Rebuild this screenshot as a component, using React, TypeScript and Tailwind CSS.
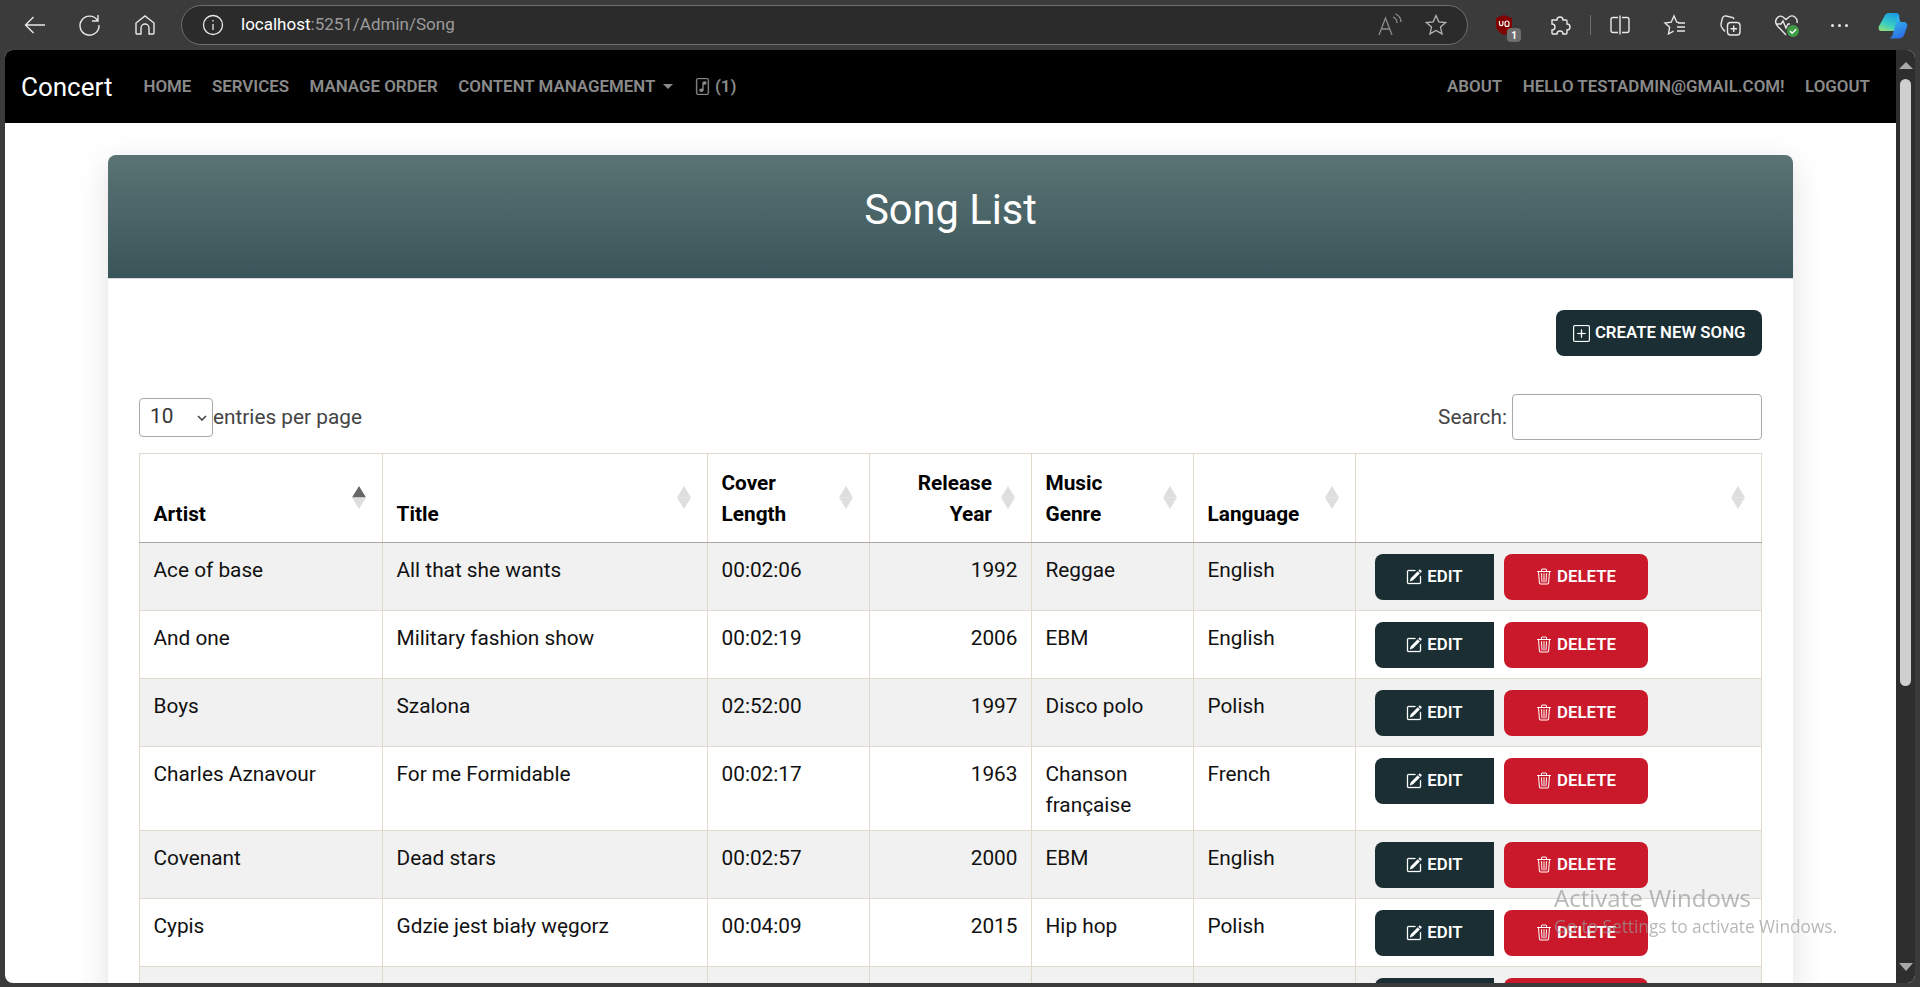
import React from "react";
import { BsPlusSquare, BsPencilSquare, BsTrash3, BsFileMusic } from "react-icons/bs";

const rows = [
  ["Ace of base", "All that she wants", "00:02:06", "1992", "Reggae", "English"],
  ["And one", "Military fashion show", "00:02:19", "2006", "EBM", "English"],
  ["Boys", "Szalona", "02:52:00", "1997", "Disco polo", "Polish"],
  ["Charles Aznavour", "For me Formidable", "00:02:17", "1963", "Chanson française", "French"],
  ["Covenant", "Dead stars", "00:02:57", "2000", "EBM", "English"],
  ["Cypis", "Gdzie jest biały węgorz", "00:04:09", "2015", "Hip hop", "Polish"],
  ["", "", "", "", "", ""],
];

function Sort({ active }: { active?: boolean }) {
  return (
    <svg width="14" height="23" viewBox="0 0 14 23" className="absolute right-[16px] top-[32px]">
      <path d="M7 0 L14 11.500 L0 11.500 Z" fill={active ? "#666666" : "#dedede"} />
      <path d="M7 23 L14 11.500 L0 11.500 Z" fill="#dedede" />
    </svg>
  );
}

function Th({ children, right, active }: { children?: React.ReactNode; right?: boolean; active?: boolean }) {
  return (
    <th className={`relative border border-[#e2d9ce] border-b-[#a9a6a3] pb-[11.5px] pl-[13.5px] pt-[14px] align-bottom text-[20.8px] font-bold leading-[31.2px] text-black ${right ? "pr-[39px] text-right" : "pr-[38px] text-left"}`}>
      {children}
      <Sort active={active} />
    </th>
  );
}

function Browser() {
  const c = "#e8e8e8";
  return (
    <div className="flex h-[50px] items-center bg-[#3b3b3b]">
      <svg width="24" height="24" viewBox="0 0 24 24" fill="none" stroke={c} strokeWidth="1.4" className="ml-[23px]"><path d="M22 12H3M10.500 4l-8 8 8 8" /></svg>
      <svg width="24" height="24" viewBox="0 0 24 24" fill="none" stroke={c} strokeWidth="1.4" className="ml-[31px]"><path d="M19.500 7.500A9.500 9.500 0 1 0 21 12M20 2v6h-6" /></svg>
      <svg width="22" height="22" viewBox="0 0 22 22" fill="none" stroke={c} strokeWidth="1.4" className="ml-[32px]"><path d="M2 19V9l9-7 9 7v10a1 1 0 0 1-1 1h-4v-6a4 4 0 0 0-8 0v6H3a1 1 0 0 1-1-1z" /></svg>
      <div className="ml-[25px] flex h-[40px] w-[1287px] items-center rounded-[20px] border border-[#6e6e6e] bg-[#2b2b2b]">
        <svg width="22" height="22" viewBox="0 0 22 22" fill="none" stroke={c} strokeWidth="1.3" className="ml-[20px]"><circle cx="11" cy="11" r="9.500" /><path d="M11 10v6M11 6v1.600" /></svg>
        <div className="ml-[17px] text-[17px] text-[#9b9b9b]"><span className="text-white">localhost</span>:5251/Admin/Song</div>
        <svg width="26" height="24" viewBox="0 0 26 24" fill="none" stroke="#8d8d8d" strokeWidth="1.3" className="ml-auto mr-[21px]"><path d="M2 22 8.500 5 15 22M4.500 16h8M16 4c2.500 1 4 3 4 6M18.500 1c3.500 1.500 5.500 4.500 5.500 8" /></svg>
        <svg width="24" height="24" viewBox="0 0 24 24" fill="none" stroke="#b5b5b5" strokeWidth="1.3" className="mr-[19px]"><path d="m12 2.500 2.800 6.300 6.900.7-5.200 4.600 1.500 6.800-6-3.500-6 3.500 1.500-6.800-5.200-4.600 6.900-.7z" /></svg>
      </div>
      <div className="relative ml-[22px] h-[30px] w-[30px] shrink-0">
        <svg width="18" height="20" viewBox="0 0 18 20" className="absolute left-[5px] top-[5px]"><path d="M1 3 9 0l8 3v8c0 4-4 7-8 9-4-2-8-5-8-9z" fill="#800000" /><path d="M4.500 6v3a1.700 1.700 0 0 0 3.400 0V6M12 6a2 2 0 0 0-2 2v1.500a2 2 0 0 0 4 0V8a2 2 0 0 0-2-2z" fill="none" stroke="#fff" strokeWidth="1.200" /></svg>
        <div className="absolute left-[17px] top-[18px] flex h-[14px] w-[14px] items-center justify-center rounded-[4px] bg-[#6e6e6e] text-[10px] font-bold text-white">1</div>
      </div>
      <svg width="24" height="24" viewBox="0 0 24 24" fill="none" stroke={c} strokeWidth="1.4" className="ml-[27.500px] shrink-0"><path d="M4 7h5a3 3 0 1 1 6 0h3a1 1 0 0 1 1 1v3a3 3 0 1 1 0 6v3a1 1 0 0 1-1 1h-3a3 3 0 1 0-6 0H5a1 1 0 0 1-1-1v-3a3 3 0 1 0 0-6V8a1 1 0 0 1 0-1z" /></svg>
      <div className="ml-[18px] h-[20px] w-[1px] shrink-0 bg-[#6e6e6e]" />
      <svg width="24" height="24" viewBox="0 0 24 24" fill="none" stroke={c} strokeWidth="1.4" className="ml-[17px] shrink-0"><path d="M12 2.500v19M10 4.500H5a2 2 0 0 0-2 2v11a2 2 0 0 0 2 2h5M14 4.500h5a2 2 0 0 1 2 2v11a2 2 0 0 1-2 2h-5" /></svg>
      <svg width="24" height="24" viewBox="0 0 24 24" fill="none" stroke={c} strokeWidth="1.4" className="ml-[31.500px] shrink-0"><path d="M16 9.500 13.800 9.200 11 3 8.200 9.200 2 10l4.600 4.200L5.500 21l5-2.800M15 10h7M14 14h8M14 18h8" /></svg>
      <svg width="24" height="24" viewBox="0 0 24 24" fill="none" stroke={c} strokeWidth="1.4" className="ml-[31px] shrink-0"><rect x="9.500" y="9.500" width="12.500" height="12.500" rx="3" /><path d="M15.700 12.500v6.500M12.500 15.700H19M16 6 15 4.500 8 3c-2-.4-3 .5-3.500 2L3 11c-.5 2 0 3 1.500 4.500l2.500 3" /></svg>
      <svg width="30" height="30" viewBox="0 0 30 30" fill="none" stroke={c} strokeWidth="1.4" className="ml-[30px] shrink-0"><path d="M14 25 5.500 16C1 11 6 4 11 7l3 2.500L17 7c4-3 9 1 8 6M4 14h5l2-3 3 7 2-4h2" /><circle cx="21" cy="21" r="6" fill="#3f9c45" stroke="none" /><path d="m18 21 2.200 2.200 4-4" stroke="#fff" /></svg>
      <div className="ml-[28.500px] flex shrink-0 gap-[4px]"><span className="h-[3px] w-[3px] rounded-full bg-[#e8e8e8]" /><span className="h-[3px] w-[3px] rounded-full bg-[#e8e8e8]" /><span className="h-[3px] w-[3px] rounded-full bg-[#e8e8e8]" /><span className="h-[3px] w-0" /></div>
      <svg width="30" height="27" viewBox="0 0 30 27" className="ml-[26.500px] shrink-0">
        <defs>
          <linearGradient id="cp1" x1="0.200" y1="0" x2="0.600" y2="1"><stop offset="0" stopColor="#37c2ee" /><stop offset="1" stopColor="#2b6fe4" /></linearGradient>
          <linearGradient id="cp2" x1="0.600" y1="0" x2="0.200" y2="1"><stop offset="0" stopColor="#1b9de2" /><stop offset="0.600" stopColor="#39cfc2" /><stop offset="1" stopColor="#8fe07a" /></linearGradient>
        </defs>
        <path d="M11 1h7c2 0 3 1 3.500 3l-2 10c-.5 3-2 5-4.500 5H3.500C1 19 0 17 .8 14.500L6 5c1-2.500 2.500-4 5-4z" fill="url(#cp2)" />
        <path d="M19 4c1 0 2 1 2.500 3l1 3h3c3 0 4.500 2 3.500 5l-2.500 7c-1 3-3 4.500-6 4.500h-10c2 0 3-1 4-3.500L19 8z" fill="url(#cp1)" />
      </svg>
    </div>
  );
}

function NavLink({ children, className = "" }: { children: React.ReactNode; className?: string }) {
  return <span className={`whitespace-nowrap text-[16.9px] font-semibold text-[#8a8a8a] ${className}`}>{children}</span>;
}

function Btn({ color, className, children }: { color: string; className: string; children: React.ReactNode }) {
  return (
    <span className={`inline-flex h-[46px] items-center justify-center gap-[5px] text-[16.8px] font-semibold text-white ${color} ${className}`}>
      {children}
    </span>
  );
}

export default function App() {
  return (
    <div className="flex h-[987px] w-[1920px] flex-col overflow-hidden bg-[#3b3b3b] font-['Roboto',sans-serif]">
      <Browser />
      <div className="ml-[5px] flex h-[933px] w-[1910px] overflow-hidden rounded-[8px] bg-white">
        <div className="flex min-w-0 flex-1 flex-col overflow-hidden">
          <nav className="flex h-[73px] shrink-0 items-center bg-black pl-[16px] pr-[26px] pt-[1px]">
            <span className="text-[26px] text-white">Concert</span>
            <div className="ml-[31px] flex items-center gap-[20.5px]">
              <NavLink>HOME</NavLink>
              <NavLink>SERVICES</NavLink>
              <NavLink>MANAGE ORDER</NavLink>
              <NavLink className="flex items-center">CONTENT MANAGEMENT<span className="ml-[8px] h-0 w-0 border-x-[5px] border-t-[5px] border-x-transparent border-t-[#8a8a8a]" /></NavLink>
              <NavLink className="flex items-center gap-[4px]"><BsFileMusic className="h-[17px] w-[17px]" stroke="currentColor" strokeWidth="0.3" /> (1)</NavLink>
            </div>
            <div className="ml-auto flex items-center gap-[20.5px]">
              <NavLink>ABOUT</NavLink>
              <NavLink>HELLO TESTADMIN@GMAIL.COM!</NavLink>
              <NavLink>LOGOUT</NavLink>
            </div>
          </nav>
          <div className="flex-1 pl-[103px] pr-[103px] pt-[32px]">
            <div className="rounded-[8px] bg-white shadow-[0_8px_32px_rgba(0,0,0,0.12)]">
              <div className="flex h-[124px] items-center justify-center rounded-t-[8px] border-b border-[#d8d8d8] bg-gradient-to-b from-[#5a7475] to-[#3a5559] pb-[13px]">
                <h1 className="text-[41.6px] text-white">Song List</h1>
              </div>
              <div className="pl-[31px] pr-[31px] pt-[31px]">
                <div className="flex justify-end">
                  <Btn color="bg-[#1a2e33]" className="rounded-[8px] px-[16.5px]"><BsPlusSquare className="h-[17px] w-[17px]" stroke="currentColor" strokeWidth="0.2" />CREATE NEW SONG</Btn>
                </div>
                <div className="mt-[38px] flex items-center justify-between text-[20.8px] text-[#444444]">
                  <div className="flex items-center">
                    <div className="relative flex h-[39px] w-[74px] items-center rounded-[4px] border border-[#a8a8a8] pl-[10px] text-[#333333]">
                      10
                      <svg width="10" height="6" viewBox="0 0 10 6" fill="none" stroke="#444" strokeWidth="1.600" className="absolute right-[5px] top-[16px]"><path d="m1 1 4 4 4-4" /></svg>
                    </div>
                    <span className="pt-[1px]">entries per page</span>
                  </div>
                  <div className="flex items-center gap-[5px]">
                    <span className="pt-[1px]">Search:</span>
                    <div className="h-[46px] w-[250px] rounded-[4px] border border-[#a8a8a8]" />
                  </div>
                </div>
                <table className="mt-[13px] w-[1622px] table-fixed border-collapse text-[20.8px] leading-[31.2px] text-[#111111]">
                  <colgroup>
                    <col className="w-[243px]" />
                    <col className="w-[325px]" />
                    <col className="w-[162px]" />
                    <col className="w-[162px]" />
                    <col className="w-[162px]" />
                    <col className="w-[162px]" />
                    <col className="w-[406px]" />
                  </colgroup>
                  <thead>
                    <tr>
                      <Th active>Artist</Th>
                      <Th>Title</Th>
                      <Th>Cover Length</Th>
                      <Th right>Release Year</Th>
                      <Th>Music Genre</Th>
                      <Th>Language</Th>
                      <Th />
                    </tr>
                  </thead>
                  <tbody>
                    {rows.map((r, i) => (
                      <tr key={i} className={i % 2 === 0 ? "bg-[#f1f1f1]" : "bg-white"}>
                        {r.map((v, j) => (
                          <td key={j} className={`border border-[#e2d9ce] px-[13.5px] pb-[8.5px] pt-[12px] align-top ${j === 3 ? "text-right" : ""}`}>{v}</td>
                        ))}
                        <td className="border border-[#e2d9ce] pb-[10px] pl-[19px] pt-[11px] align-top">
                          <div className="flex gap-[10px]">
                            <Btn color="bg-[#1a2e33]" className="w-[119px] rounded-l-[8px]">
                              {i < 6 && <><BsPencilSquare className="h-[16px] w-[16px]" stroke="currentColor" strokeWidth="0.3" />EDIT</>}
                            </Btn>
                            <Btn color="bg-[#c9192b]" className="w-[144px] rounded-[8px]">
                              {i < 6 && <><BsTrash3 className="h-[17px] w-[16px]" />DELETE</>}
                            </Btn>
                          </div>
                        </td>
                      </tr>
                    ))}
                  </tbody>
                </table>
              </div>
            </div>
          </div>
        </div>
        <div className="flex w-[19px] shrink-0 flex-col items-center bg-[#2e2e2e] pt-[12px]">
          <div className="h-0 w-0 border-x-[7px] border-b-[7px] border-x-transparent border-b-[#a8a8a8]" />
          <div className="mt-[10px] h-[607px] w-[11px] rounded-[6px] bg-[#cfcfcf]" />
          <div className="mb-[12px] mt-auto h-0 w-0 border-x-[7px] border-t-[8px] border-x-transparent border-t-[#a8a8a8]" />
        </div>
      </div>
      <div className="pointer-events-none fixed left-[1554px] top-[884px] font-['Open_Sans',sans-serif] text-[#9a9a9a] opacity-70">
        <div className="text-[24px] leading-[28px]">Activate Windows</div>
        <div className="mt-[4px] text-[17.3px] leading-[22px]">Go to Settings to activate Windows.</div>
      </div>
    </div>
  );
}
